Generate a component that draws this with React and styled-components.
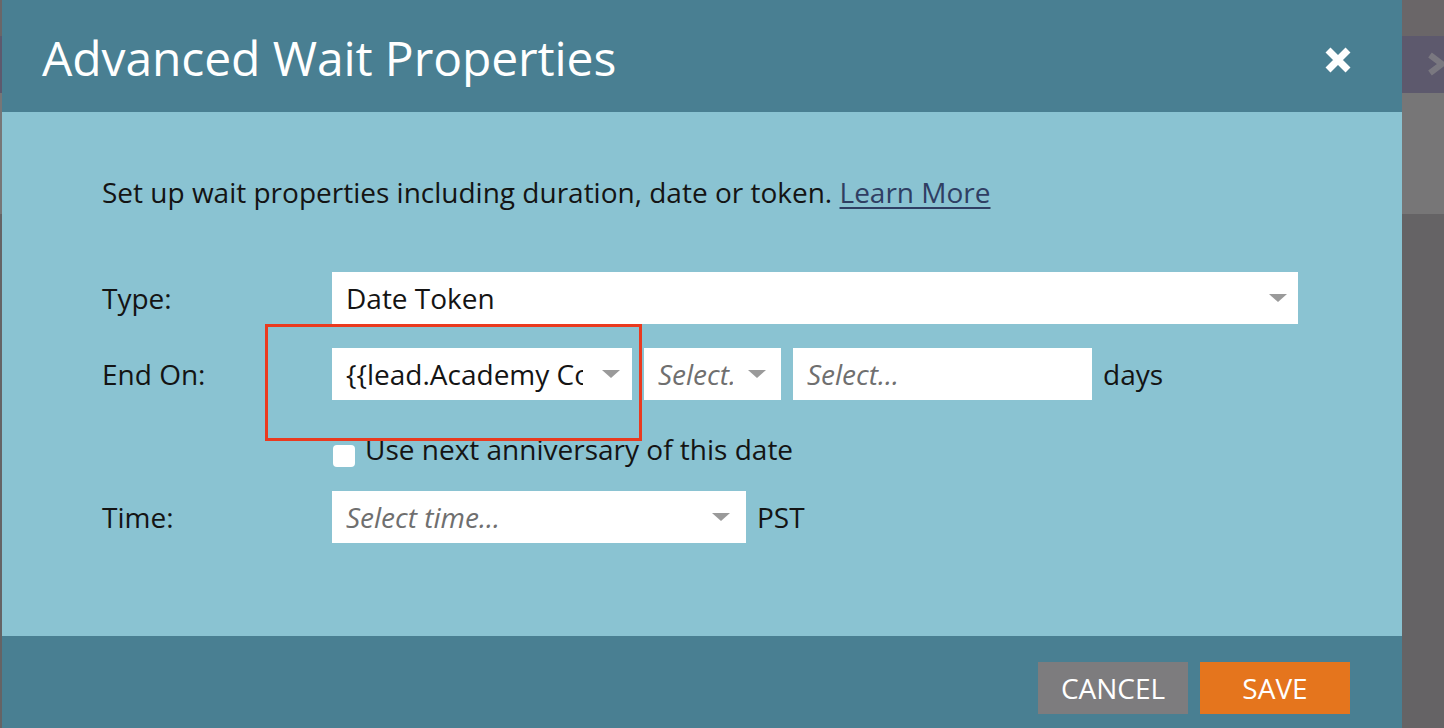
import React from "react";
import styled, { createGlobalStyle } from "styled-components";

const Global = createGlobalStyle`
  html, body { margin: 0; padding: 0; }
  body {
    width: 1444px;
    height: 728px;
    overflow: hidden;
    font-family: "Open Sans", "Noto Sans", sans-serif;
    background: linear-gradient(
      to bottom,
      #6a6668 0px, #6a6668 36px,
      #5d596d 36px, #5d596d 93px,
      #777677 93px, #777677 214px,
      #656365 214px, #656365 100%
    );
  }
`;

const Page = styled.div`
  position: relative;
  display: flex;
  width: 1444px;
  height: 728px;
  padding-left: 2px;
  box-sizing: border-box;
`;

const Dialog = styled.div`
  width: 1400px;
  height: 728px;
  display: flex;
  flex-direction: column;
  background: #8ac3d2;
`;

const Header = styled.div`
  height: 112px;
  flex: 0 0 112px;
  background: #497f92;
  display: flex;
  align-items: center;
  justify-content: space-between;
  padding: 0 49px 0 40px;
  box-sizing: border-box;
`;

const Title = styled.h1`
  margin: 4px 0 0 0;
  color: #ffffff;
  font-size: 48px;
  font-weight: 400;
  line-height: 60px;
  letter-spacing: -0.1px;
`;

const Close = styled.button`
  border: none;
  background: none;
  padding: 0;
  width: 30px;
  height: 30px;
  margin-top: 8px;
  cursor: pointer;
  display: flex;
`;

const Body = styled.div`
  flex: 1;
  padding: 62px 0 0 100px;
  box-sizing: border-box;
`;

const Intro = styled.p`
  margin: 0 0 62px 0;
  font-size: 28px;
  color: #141414;
  line-height: 36px;
`;

const Link = styled.a`
  color: #2f3e63;
  text-decoration: underline;
  text-underline-offset: 4px;
  text-decoration-thickness: 2px;
`;

const Form = styled.div`
  display: grid;
  grid-template-columns: 230px auto;
  row-gap: 24px;
  align-items: center;
`;

const Label = styled.div`
  font-size: 28px;
  color: #141414;
  line-height: 36px;
`;

const Fields = styled.div`
  position: relative;
  display: flex;
  align-items: center;
  gap: 12px;
`;

const Box = styled.div`
  width: ${(p) => p.w}px;
  height: 52px;
  flex: 0 0 auto;
  background: #ffffff;
  box-sizing: border-box;
  display: flex;
  align-items: center;
  padding: 0 0 0 14px;
  font-size: 28px;
  color: ${(p) => (p.placeholder ? "#6f6f6f" : "#141414")};
  font-style: ${(p) => (p.placeholder ? "italic" : "normal")};
  overflow: hidden;
  white-space: nowrap;
`;

const BoxText = styled.span`
  flex: 1;
  min-width: 0;
  overflow: hidden;
  white-space: nowrap;
  margin-right: ${(p) => p.mr || 0}px;
`;

const Arrow = styled.span`
  flex: 0 0 auto;
  width: 0;
  height: 0;
  border-left: 9px solid transparent;
  border-right: 9px solid transparent;
  border-top: 8px solid #9a9a9a;
  margin-left: 8px;
  margin-right: ${(p) => p.mr || 0}px;
`;

const Unit = styled.span`
  font-size: 28px;
  color: #141414;
  margin-left: -1px;
`;

const Highlight = styled.div`
  position: absolute;
  left: -67px;
  top: -24px;
  width: 377px;
  height: 117px;
  border: 3px solid #ea3a1f;
  box-sizing: border-box;
  pointer-events: none;
`;

const CheckRow = styled.label`
  grid-column: 2;
  display: flex;
  align-items: flex-start;
  gap: 10px;
  margin-top: 21px;
  height: 22px;
  font-size: 28px;
  color: #141414;
`;

const Check = styled.span`
  flex: 0 0 auto;
  width: 22px;
  height: 22px;
  background: #ffffff;
  border-radius: 4px;
  margin-left: 1px;
`;

const CheckText = styled.span`
  line-height: 36px;
  margin-top: -14px;
`;

const Footer = styled.div`
  height: 92px;
  flex: 0 0 92px;
  background: #497f92;
  display: flex;
  justify-content: flex-end;
  align-items: flex-start;
  gap: 12px;
  padding: 26px 52px 0 0;
  box-sizing: border-box;
`;

const Button = styled.button`
  width: 150px;
  height: 52px;
  border: none;
  color: #ffffff;
  background: ${(p) => (p.primary ? "#e5751d" : "#7d7c7e")};
  font-family: "Open Sans", "Noto Sans", sans-serif;
  font-size: 28px;
  padding: 0;
  cursor: pointer;
`;

const BackX = styled.svg`
  position: absolute;
  left: 1428px;
  top: 52px;
`;

export default function App() {
  return (
    <>
      <Global />
      <Page>
        <Dialog>
          <Header>
            <Title>Advanced Wait Properties</Title>
            <Close aria-label="Close">
              <svg width="30" height="30" viewBox="0 0 30 30">
                <path d="M5 5 L25 25 M25 5 L5 25" stroke="#fff" strokeWidth="7" strokeLinecap="butt" />
              </svg>
            </Close>
          </Header>
          <Body>
            <Intro>
              Set up wait properties including duration, date or token. <Link href="#">Learn More</Link>
            </Intro>
            <Form>
              <Label>Type:</Label>
              <Fields>
                <Box w={966}>
                  <BoxText>Date Token</BoxText>
                  <Arrow mr={11} />
                </Box>
              </Fields>

              <Label>End On:</Label>
              <Fields>
                <Box w={300}>
                  <BoxText mr={11}>{"{{lead.Academy Course Date}}"}</BoxText>
                  <Arrow mr={12} />
                </Box>
                <Highlight />
                <Box w={137} placeholder>
                  <BoxText mr={7}>Select...</BoxText>
                  <Arrow mr={15} />
                </Box>
                <Box w={299} placeholder>
                  <BoxText>Select...</BoxText>
                </Box>
                <Unit>days</Unit>
              </Fields>

              <CheckRow>
                <Check />
                <CheckText>Use next anniversary of this date</CheckText>
              </CheckRow>

              <Label>Time:</Label>
              <Fields>
                <Box w={414} placeholder>
                  <BoxText>Select time...</BoxText>
                  <Arrow mr={16} />
                </Box>
                <Unit>PST</Unit>
              </Fields>
            </Form>
          </Body>
          <Footer>
            <Button>CANCEL</Button>
            <Button primary>SAVE</Button>
          </Footer>
        </Dialog>
        <BackX width="20" height="24" viewBox="0 0 20 24">
          <path d="M2 3 L14 12 L2 21" stroke="#7a7880" strokeWidth="6" fill="none" />
        </BackX>
      </Page>
    </>
  );
}
